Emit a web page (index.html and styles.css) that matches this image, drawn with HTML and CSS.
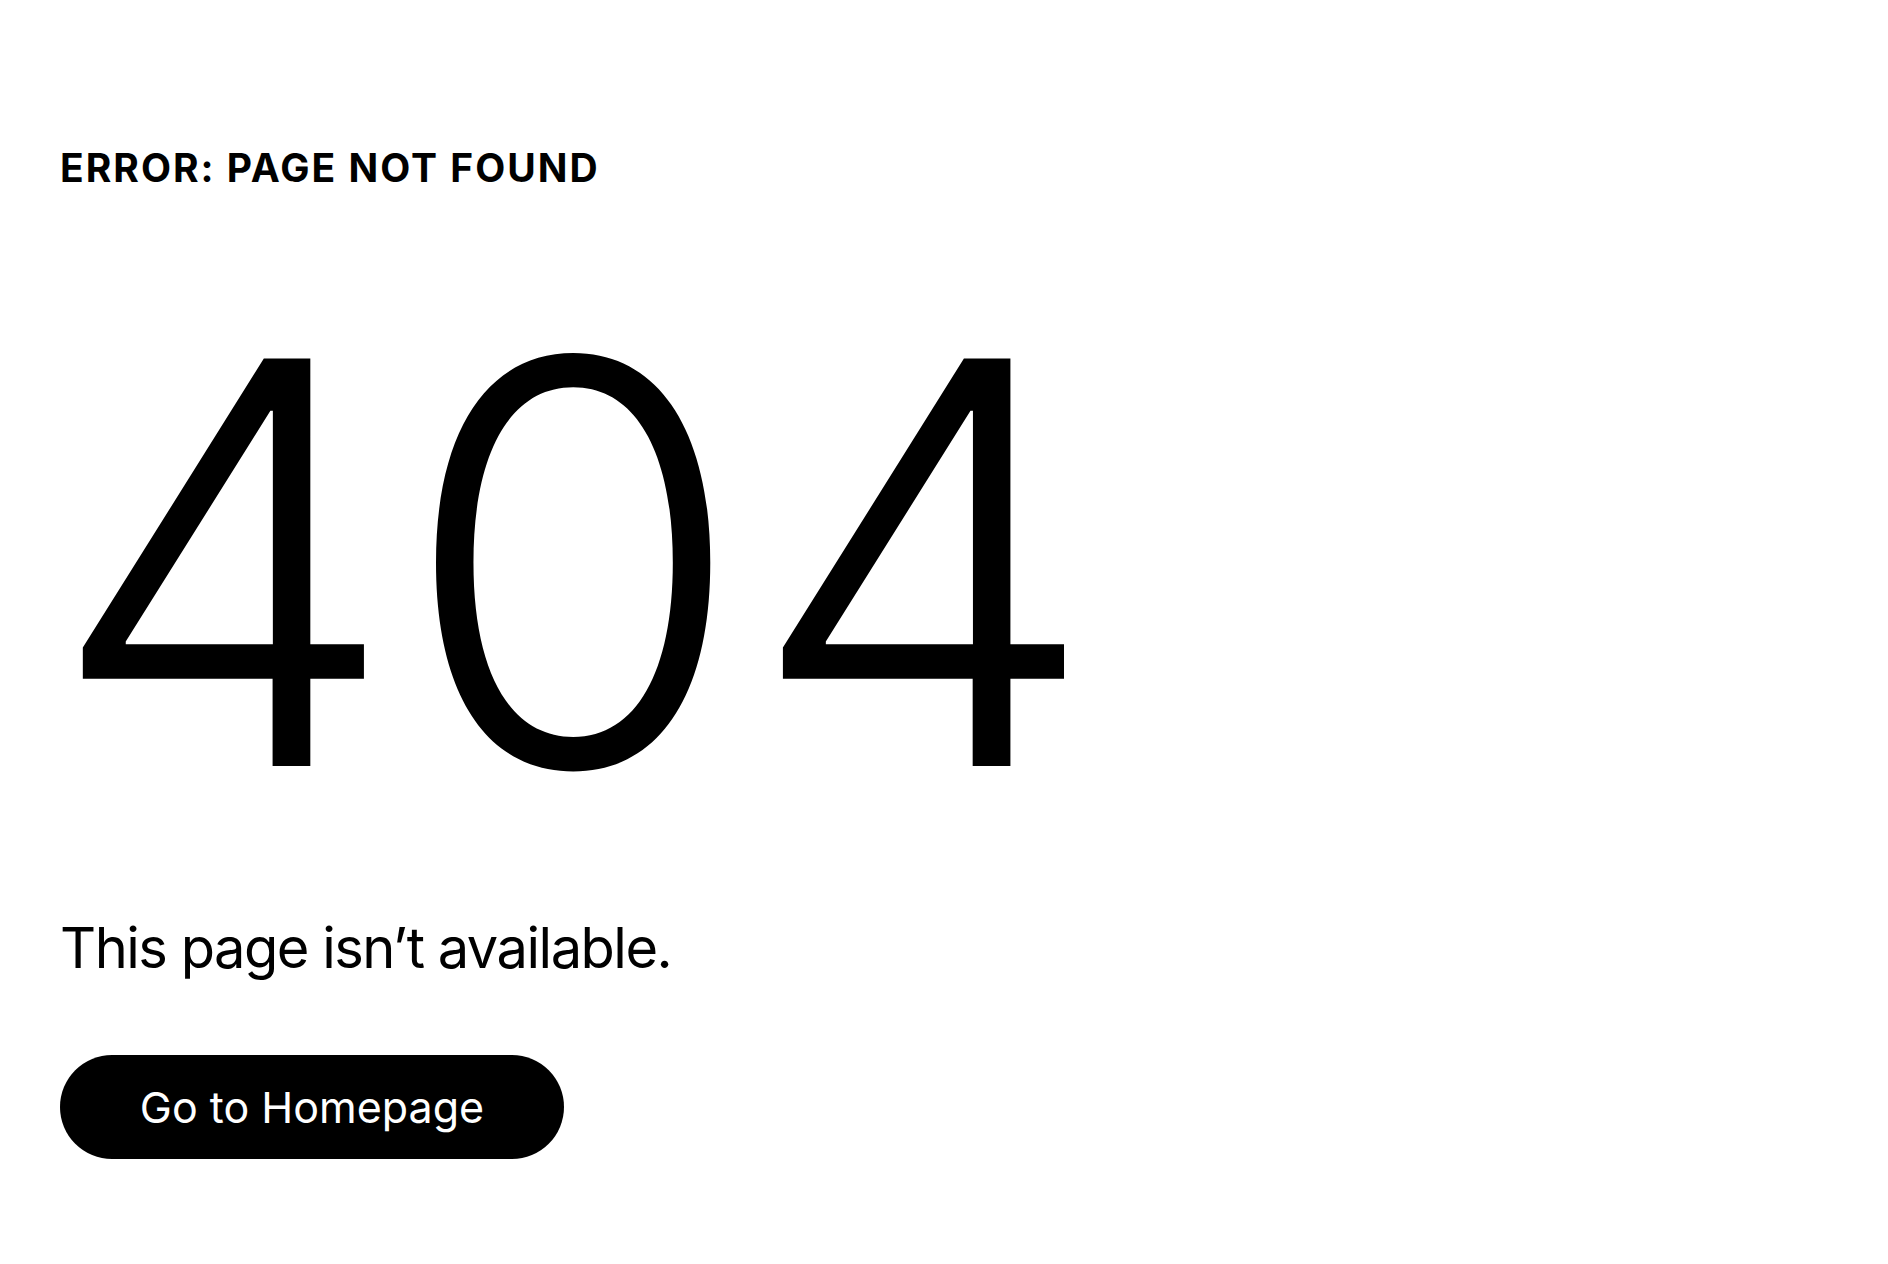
FILE: index.html
```html
<!DOCTYPE html>
<html>
<head>
  <title>Page Not Found</title>
  <link rel="stylesheet" href="styles.css">
</head>
<body>
  <div class="error-page">
    <h1 class="error-label">ERROR: PAGE NOT FOUND</h1>
    <div class="error-code">404</div>
    <p class="error-message">This page isn’t available.</p>
    <a class="home-button" href="#">Go to Homepage</a>
  </div>
</body>
</html>
```

FILE: styles.css
```css
body {
  margin: 0;
  background-color: #fff;
  color: #000;
  font-family: Inter, "Noto Sans", Arial, sans-serif;
}

.error-page {
  padding: 144px 0 0 60px;
}

.error-label {
  margin: 0;
  font-size: 39px;
  line-height: 48px;
  font-weight: 700;
  letter-spacing: 2px;
}

.error-code {
  margin: 140px 0 0 -13px;
  font-size: 560px;
  line-height: 460px;
  font-weight: 340;
  letter-spacing: 1px;
}

.error-message {
  margin: 120px 0 0 0;
  font-size: 56px;
  line-height: 72px;
  font-weight: 400;
  letter-spacing: -1.5px;
}

.home-button {
  display: inline-block;
  margin-top: 71px;
  width: 504px;
  height: 104px;
  line-height: 104px;
  border-radius: 52px;
  background-color: #000;
  color: #fff;
  text-align: center;
  text-decoration: none;
  font-size: 43px;
}
```
